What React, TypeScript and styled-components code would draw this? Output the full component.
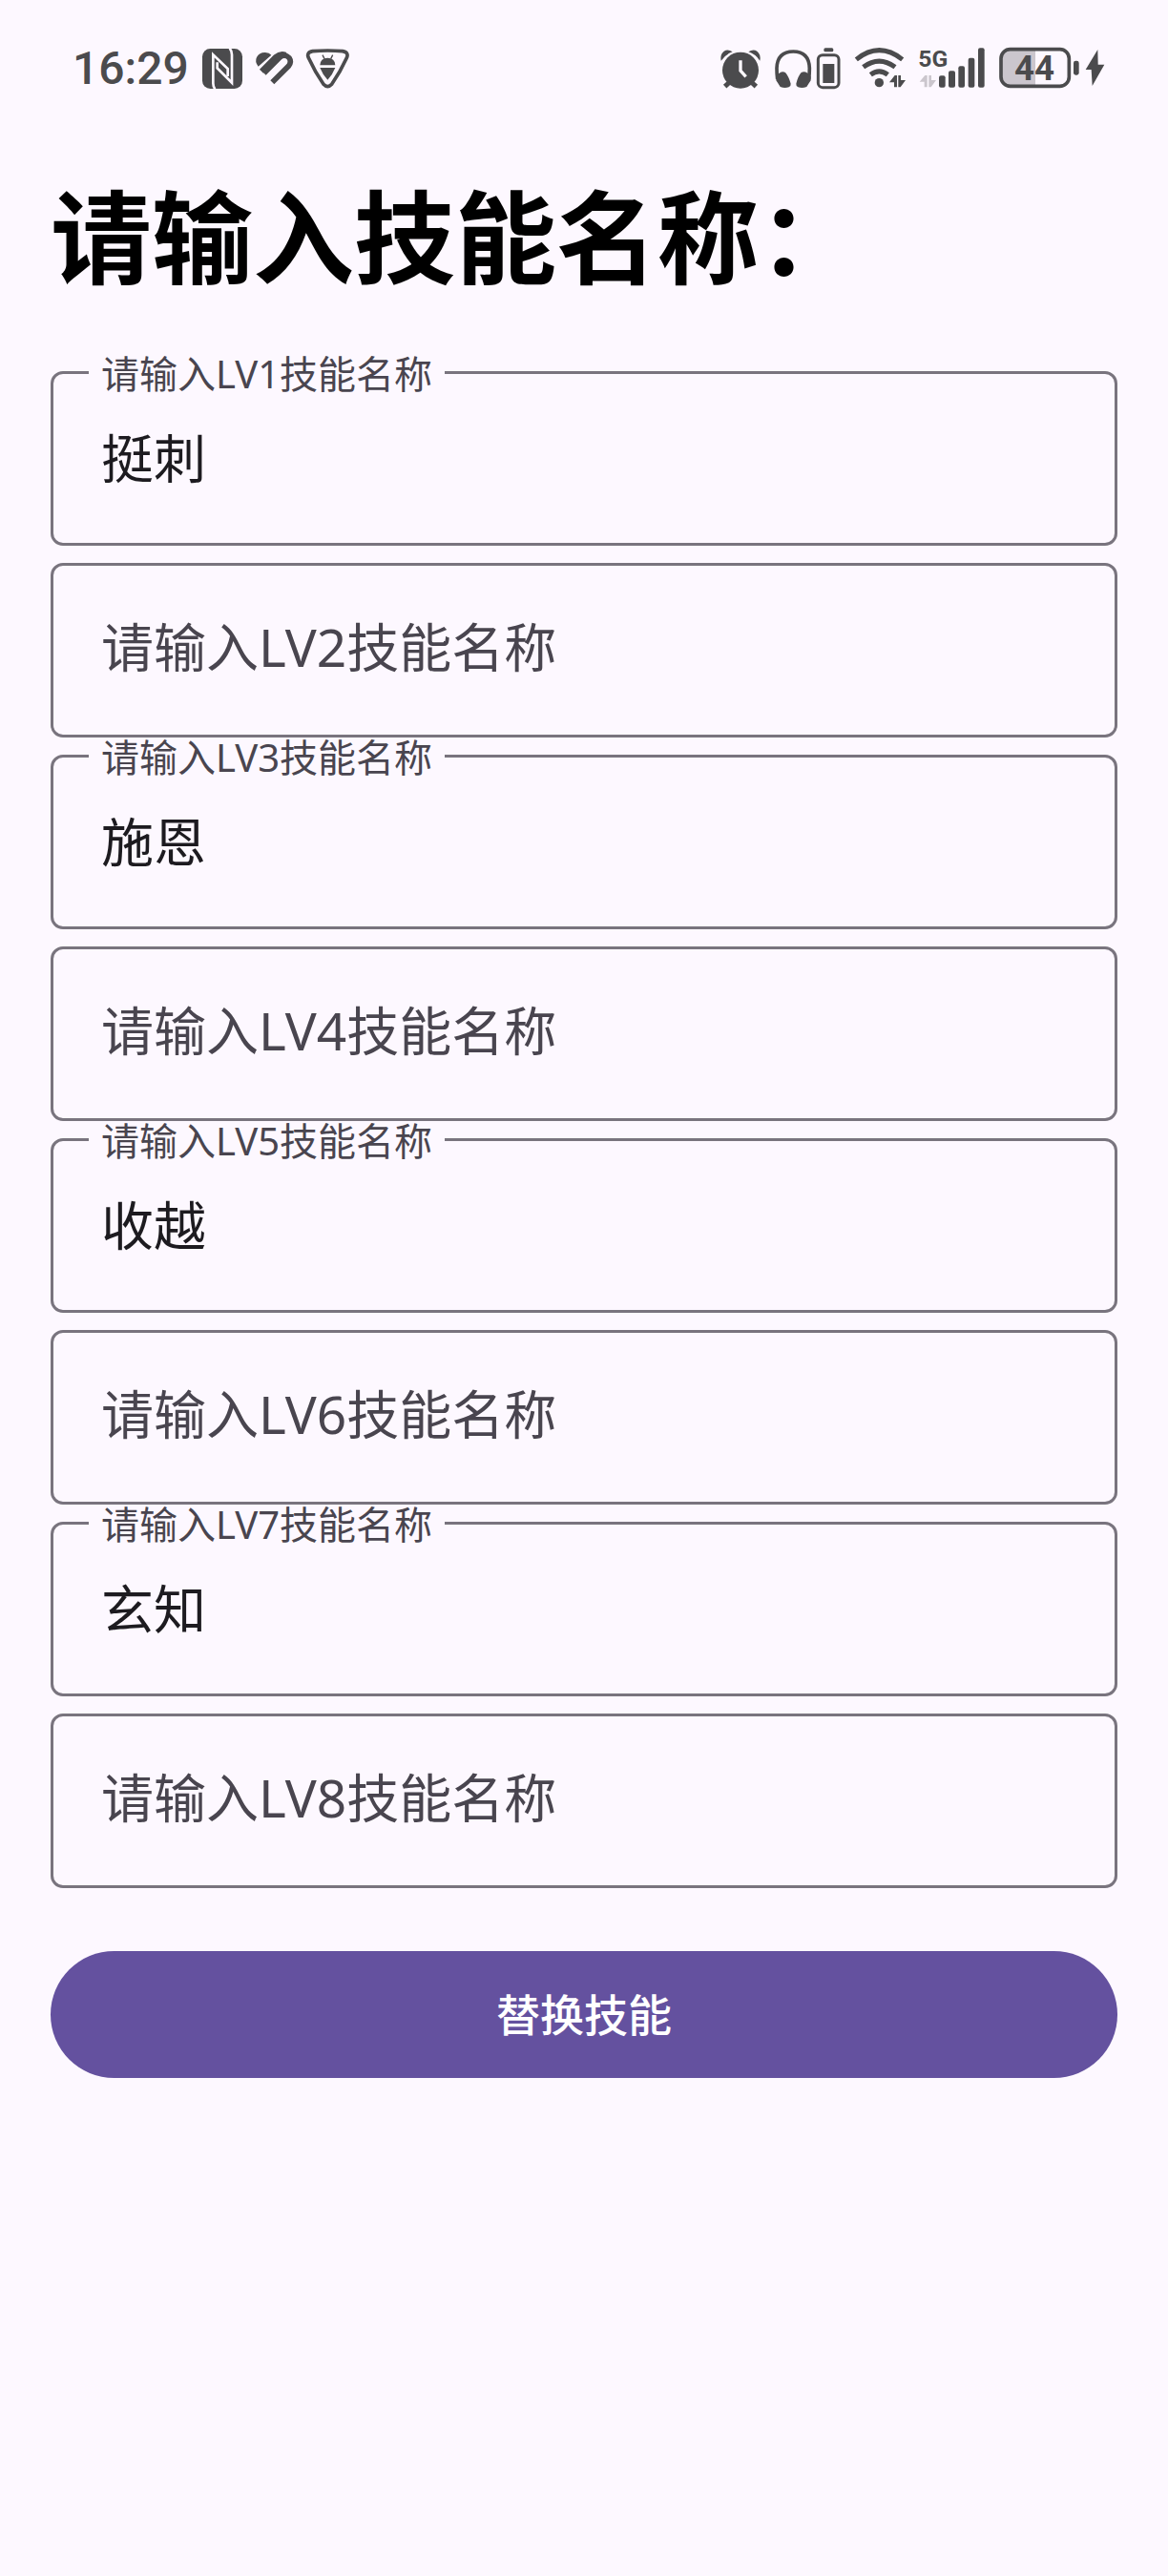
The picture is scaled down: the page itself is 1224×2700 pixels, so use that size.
import React, { useId, useState } from "react";
import styled, { createGlobalStyle } from "styled-components";

const INK = "#4b4b4d";
const SURFACE = "#fdf8ff";

const GlobalStyle = createGlobalStyle`
  *, *::before, *::after { box-sizing: border-box; }
  html { min-height: 100%; background: ${SURFACE}; }
  body {
    margin: 0;
    background: ${SURFACE};
    font-family: "Noto Sans", "Noto Sans CJK SC", sans-serif;
  }
`;

const StatusBar = styled.header`
  display: flex;
  justify-content: space-between;
  align-items: center;
  padding: 50px 67px 0 76px;
  color: ${INK};
`;

const StatusGroup = styled.div<{ $gap: number }>`
  display: flex;
  align-items: center;
  gap: ${(p) => p.$gap}px;
`;

const Clock = styled.time`
  font-family: Roboto, "Noto Sans", sans-serif;
  font-size: 48px;
  font-weight: 500;
  line-height: 44px;
`;

const Glyph = styled.svg`
  display: block;
  height: 44px;
  overflow: visible;
  fill: currentColor;
`;

const NetworkText = styled.text`
  font-family: "Liberation Sans Narrow", Roboto, sans-serif;
  font-size: 74px;
  font-weight: 700;
`;

const ChargeText = styled.text`
  font-family: Roboto, sans-serif;
  font-size: 110px;
  font-weight: 700;
`;

const Main = styled.main`
  padding: 86px 53px 0;
`;

const Title = styled.h1`
  margin: 0 0 73px;
  font-size: 106px;
  font-weight: 700;
  line-height: 136px;
  color: #000;
`;

const Form = styled.form`
  display: flex;
  flex-direction: column;
`;

const Fields = styled.div`
  display: grid;
  gap: 18px;
  margin-bottom: 66px;
`;

const Field = styled.div`
  position: relative;
`;

const TextBox = styled.input`
  display: block;
  width: 100%;
  height: 183px;
  padding: 0 50px 8px;
  border: 3px solid #79747e;
  border-radius: 13px;
  outline: none;
  background: transparent;
  color: #1d1b20;
  font: 400 55px/80px "Noto Sans", "Noto Sans CJK SC", sans-serif;
`;

const FieldLabel = styled.label<{ $floating: boolean }>`
  position: absolute;
  left: 40px;
  top: ${(p) => (p.$floating ? "-17px" : "48px")};
  padding: 0 13px;
  background: ${SURFACE};
  color: #49454f;
  font-size: ${(p) => (p.$floating ? 40 : 55)}px;
  line-height: ${(p) => (p.$floating ? 40 : 80)}px;
  pointer-events: none;
`;

const Submit = styled.button`
  height: 133px;
  padding: 0 48px 6px;
  border: 0;
  border-radius: 67px;
  background: #64519f;
  color: #fff;
  font: 500 46px/66px "Noto Sans CJK SC", sans-serif;
  cursor: pointer;
`;

const NfcIcon = () => (
  <Glyph viewBox="450 60 126 132" width="42" role="img" aria-label="NFC">
    <rect x="450" y="63" width="126" height="126" rx="25" />
    <g fill="none" stroke={SURFACE} strokeWidth="8">
      <path d="M490 190 Q484 184 484 172 V82 L530 126 V150" />
      <path d="M536 62 Q543 70 543 82 V170 L497 124 V106" />
    </g>
  </Glyph>
);

const HealthIcon = () => (
  <Glyph viewBox="624 60 117 132" width="39" role="img" aria-label="健康">
    <path d="M632 119 Q620 104 627 90 Q636 74 654 75 Q667 76 673 83Z" />
    <g fill="none" stroke="currentColor" strokeWidth="17">
      <path d="M642 134 L687 89 Q702 76 718 83" />
      <path d="M676 169 L727 118 Q738 105 729 92 Q716 78 700 90 L650 140" />
    </g>
    <path d="M662 151 L710 103" fill="none" stroke={SURFACE} strokeWidth="11" strokeLinecap="square" />
  </Glyph>
);

const ShieldIcon = () => (
  <Glyph viewBox="782 60 135 132" width="45" role="img" aria-label="调试">
    <path
      d="M802 71 Q849 67 896 71 Q918 75 908 94 Q890 134 862 175 Q849 189 836 175 Q808 134 790 94 Q780 75 802 71Z"
      fill="none"
      stroke="currentColor"
      strokeWidth="11"
    />
    <path d="M825 115 Q826 92 849 92 Q872 92 873 115Z" />
    <path d="M825 123 H873 Q865 144 849 161 Q833 144 825 123Z" />
    <path d="M833 83 L839 95 M865 83 L859 95" stroke="currentColor" strokeWidth="4" />
  </Glyph>
);

const AlarmIcon = () => (
  <Glyph viewBox="48 60 126 132" width="42" role="img" aria-label="闹钟">
    <circle cx="111" cy="131" r="57" />
    <path d="M50 101 Q46 81 59 71 Q71 63 86 73 Q64 80 50 101Z" />
    <path d="M172 101 Q176 81 163 71 Q151 63 136 73 Q158 80 172 101Z" />
    <path d="M77 168 L62 182 M145 168 L160 182" stroke="currentColor" strokeWidth="15" />
    <path d="M111 100 V132 L128 151" fill="none" stroke={SURFACE} strokeWidth="10" />
  </Glyph>
);

const HeadsetIcon = () => (
  <Glyph viewBox="219 60 207 132" width="69" role="img" aria-label="耳机电量">
    <path
      d="M227 158 Q225 142 225 124 Q227 72 277 72 Q326 72 328 124 Q328 142 326 158"
      fill="none"
      stroke="currentColor"
      strokeWidth="11"
    />
    <path d="M223 151 Q238 130 252 138 Q262 149 269 173 Q270 181 263 184 Q250 189 236 183 Q229 172 223 163Z" />
    <path d="M332 151 Q317 130 302 138 Q292 149 286 173 Q285 181 292 184 Q305 189 319 183 Q326 172 332 163Z" />
    <rect x="373" y="61" width="30" height="12" rx="5" />
    <rect x="355" y="83" width="65" height="102" rx="14" fill="none" stroke="currentColor" strokeWidth="9" />
    <rect x="370" y="111" width="36" height="60" />
  </Glyph>
);

const WifiIcon = () => (
  <Glyph viewBox="471 60 159 132" width="53" role="img" aria-label="无线网络">
    <g fill="none" stroke="currentColor" strokeWidth="15">
      <path d="M475 97 Q547 39 620 97" />
      <path d="M497 121 Q547 84 597 121" />
      <path d="M520 145 Q547 124 574 145" />
    </g>
    <circle cx="547" cy="170" r="14" />
    <path d="M579 169 L596 147 H603 V184 H594 V169Z" />
    <path d="M607 147 H615 V162 H630 L614 184 H607Z" />
  </Glyph>
);

const SignalIcon = () => (
  <Glyph viewBox="66 60 204 132" width="68" role="img" aria-label="5G 信号">
    <NetworkText x="61" y="120">5G</NetworkText>
    <g fill="#cbc6cd">
      <path d="M65 167 L82 147 H89 V184 H80 V167Z" />
      <path d="M94 147 H102 V162 H117 L101 184 H94Z" />
    </g>
    <rect x="126" y="148" width="20" height="37" rx="6" />
    <rect x="156" y="133" width="21" height="52" rx="6" />
    <rect x="187" y="118" width="20" height="67" rx="6" />
    <rect x="218" y="92" width="20" height="93" rx="6" />
    <rect x="249" y="61" width="20" height="124" rx="6" />
  </Glyph>
);

const BatteryIcon = () => (
  <Glyph viewBox="318 60 252 132" width="84" role="img" aria-label="电量 44">
    <path d="M432 66 V180 H355 Q325 180 325 150 V96 Q325 66 355 66Z" fill="#cbc6cd" />
    <rect x="324" y="65" width="214" height="116" rx="29" fill="none" stroke="currentColor" strokeWidth="11" />
    <rect x="552" y="101" width="17" height="45" rx="7" />
    <ChargeText x="429" y="162" textAnchor="middle">44</ChargeText>
  </Glyph>
);

const BoltIcon = () => (
  <Glyph viewBox="588 60 60 132" width="20" role="img" aria-label="充电中">
    <path d="M628 66 L590 129 H608 L611 180 L649 113 H629Z" />
  </Glyph>
);

type SkillFieldProps = {
  level: number;
  value: string;
  onChange: (value: string) => void;
};

function SkillField({ level, value, onChange }: SkillFieldProps) {
  const id = useId();
  const [focused, setFocused] = useState(false);
  return (
    <Field>
      <TextBox
        id={id}
        type="text"
        value={value}
        onChange={(e) => onChange(e.target.value)}
        onFocus={() => setFocused(true)}
        onBlur={() => setFocused(false)}
      />
      <FieldLabel htmlFor={id} $floating={focused || value !== ""}>
        请输入LV{level}技能名称
      </FieldLabel>
    </Field>
  );
}

export default function App() {
  const [skills, setSkills] = useState(["挺刺", "", "施恩", "", "收越", "", "玄知", ""]);

  const update = (index: number, value: string) =>
    setSkills((prev) => prev.map((s, i) => (i === index ? value : s)));

  return (
    <>
      <GlobalStyle />
      <StatusBar>
        <StatusGroup $gap={14}>
          <Clock>16:29</Clock>
          <NfcIcon />
          <HealthIcon />
          <ShieldIcon />
        </StatusGroup>
        <StatusGroup $gap={15}>
          <AlarmIcon />
          <HeadsetIcon />
          <WifiIcon />
          <SignalIcon />
          <StatusGroup $gap={6}>
            <BatteryIcon />
            <BoltIcon />
          </StatusGroup>
        </StatusGroup>
      </StatusBar>
      <Main>
        <Title>请输入技能名称：</Title>
        <Form onSubmit={(e) => e.preventDefault()}>
          <Fields>
            {skills.map((skill, i) => (
              <SkillField key={i} level={i + 1} value={skill} onChange={(v) => update(i, v)} />
            ))}
          </Fields>
          <Submit type="submit">替换技能</Submit>
        </Form>
      </Main>
    </>
  );
}
